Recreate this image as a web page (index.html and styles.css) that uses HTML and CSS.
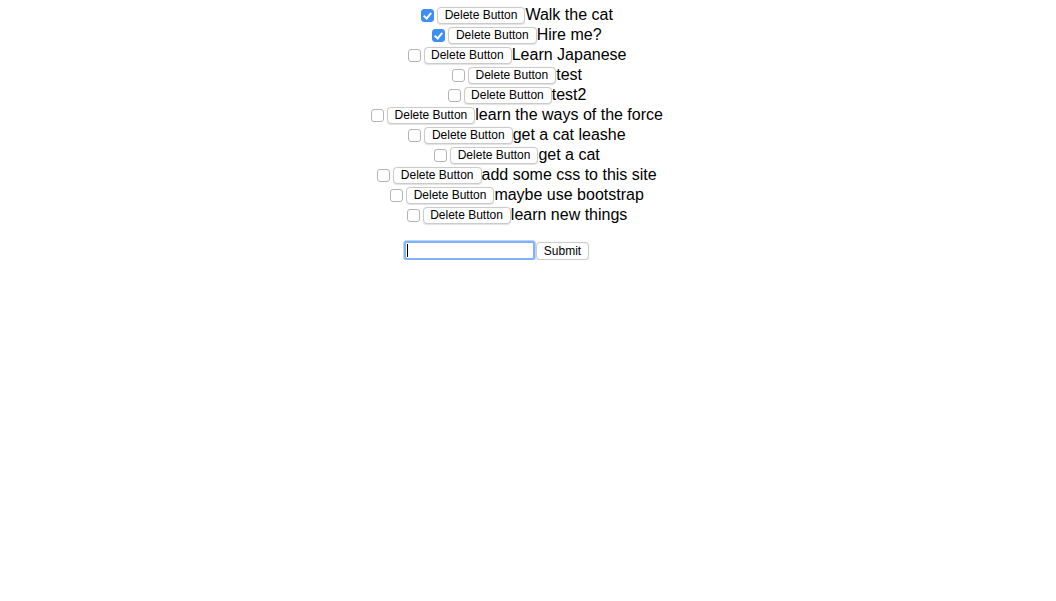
FILE: index.html
```html
<!DOCTYPE html>
<html lang="en">
<head>
<meta charset="utf-8">
<title>Todo</title>
<link rel="stylesheet" href="styles.css">
</head>
<body>
<div class="todo-app">
  <ul class="todo-list">
    <li class="todo-item"><input type="checkbox" class="todo-check" checked><button class="btn">Delete Button</button><span class="todo-text">Walk the cat</span></li>
    <li class="todo-item"><input type="checkbox" class="todo-check" checked><button class="btn">Delete Button</button><span class="todo-text">Hire me?</span></li>
    <li class="todo-item"><input type="checkbox" class="todo-check"><button class="btn">Delete Button</button><span class="todo-text">Learn Japanese</span></li>
    <li class="todo-item"><input type="checkbox" class="todo-check"><button class="btn">Delete Button</button><span class="todo-text">test</span></li>
    <li class="todo-item"><input type="checkbox" class="todo-check"><button class="btn">Delete Button</button><span class="todo-text">test2</span></li>
    <li class="todo-item"><input type="checkbox" class="todo-check"><button class="btn">Delete Button</button><span class="todo-text">learn the ways of the force</span></li>
    <li class="todo-item"><input type="checkbox" class="todo-check"><button class="btn">Delete Button</button><span class="todo-text">get a cat leashe</span></li>
    <li class="todo-item"><input type="checkbox" class="todo-check"><button class="btn">Delete Button</button><span class="todo-text">get a cat</span></li>
    <li class="todo-item"><input type="checkbox" class="todo-check"><button class="btn">Delete Button</button><span class="todo-text">add some css to this site</span></li>
    <li class="todo-item"><input type="checkbox" class="todo-check"><button class="btn">Delete Button</button><span class="todo-text">maybe use bootstrap</span></li>
    <li class="todo-item"><input type="checkbox" class="todo-check"><button class="btn">Delete Button</button><span class="todo-text">learn new things</span></li>
  </ul>
  <form class="todo-form">
    <span class="field"><input type="text" class="todo-input"></span><button type="submit" class="btn btn-submit">Submit</button>
  </form>
</div>
</body>
</html>
```

FILE: styles.css
```css
html, body {
  margin: 0;
  padding: 0;
  background: #ffffff;
}

body {
  font-family: "Liberation Sans", Arial, Helvetica, sans-serif;
  color: #000000;
}

.todo-app {
  padding-top: 5px;
}

.todo-list {
  list-style: none;
  margin: 0;
  padding: 0 26px 0 0;
}

.todo-item {
  display: flex;
  justify-content: center;
  align-items: center;
  height: 20px;
}

.todo-check {
  appearance: none;
  -webkit-appearance: none;
  box-sizing: border-box;
  width: 13px;
  height: 13px;
  margin: 1px 3px 0 4px;
  border: 1px solid #b4b4b4;
  border-radius: 3px;
  background: #ffffff;
  position: relative;
}

.todo-check:checked {
  background: #3b8ff6;
  border-color: #3b8ff6;
}

.todo-check:checked::after {
  content: "";
  position: absolute;
  left: 3px;
  top: 1px;
  width: 3px;
  height: 6px;
  border-right: 2px solid #ffffff;
  border-bottom: 2px solid #ffffff;
  transform: rotate(40deg);
}

.btn {
  box-sizing: border-box;
  height: 17px;
  margin: 1px 0 0 0;
  padding: 0 7px 0 6.5px;
  font-family: "Liberation Sans", Arial, Helvetica, sans-serif;
  font-size: 12px;
  line-height: 15px;
  color: #000000;
  background: #ffffff;
  border: 1px solid #cbcbcb;
  border-radius: 4px;
  box-shadow: 0 0.5px 1px rgba(0, 0, 0, 0.12);
}

.todo-text {
  font-size: 16px;
  line-height: 20px;
  white-space: nowrap;
}

.todo-form {
  display: flex;
  justify-content: center;
  align-items: center;
  margin: 16px 0 0 0;
  padding-right: 63px;
}

.field {
  position: relative;
  display: inline-flex;
}

.field::before {
  content: "";
  position: absolute;
  left: 3px;
  top: 3px;
  width: 1px;
  height: 13px;
  background: #000000;
}

.todo-input {
  box-sizing: border-box;
  width: 131px;
  height: 19px;
  margin: 0;
  padding: 0 3px;
  border: 2px solid #80b3fb;
  border-radius: 3px;
  box-shadow: 0 0 0 1px #b9d5fc;
  outline: none;
  background: #ffffff;
  font-size: 13px;
}

.btn-submit {
  height: 18px;
  margin: 1px 0 0 1px;
  padding: 0 7px;
}
```
